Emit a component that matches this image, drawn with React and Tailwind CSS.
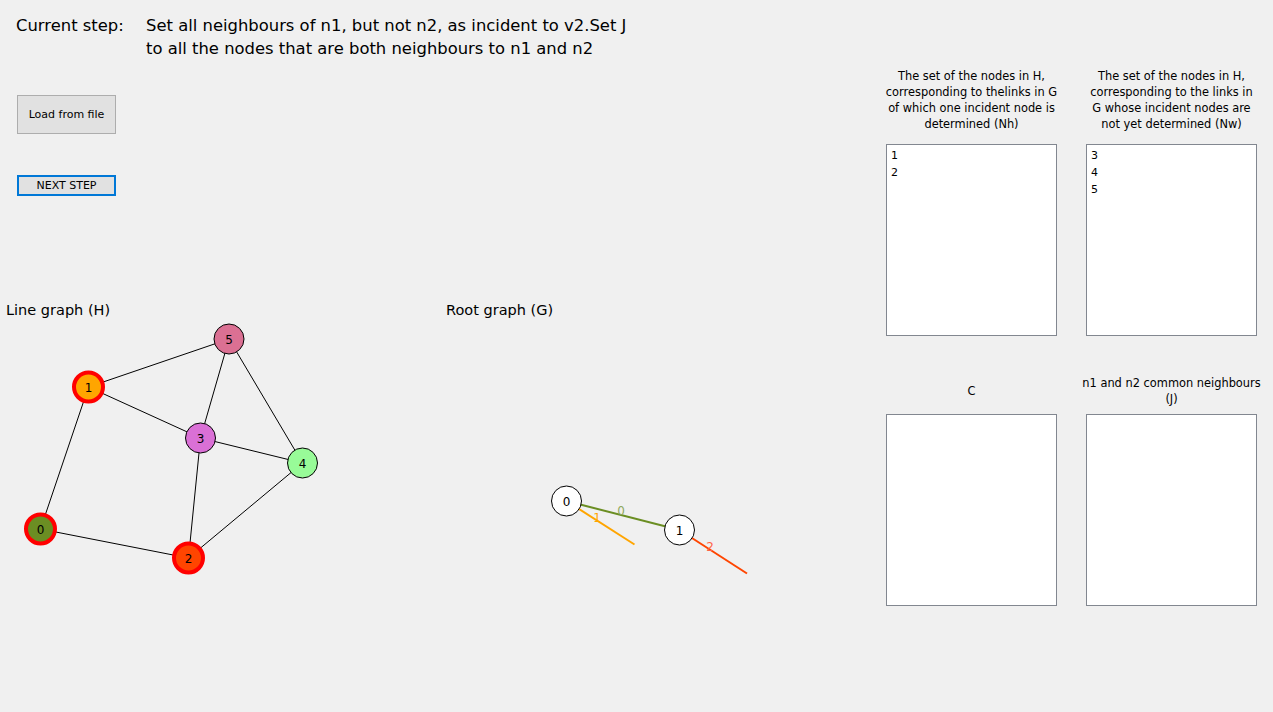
import React from "react";

const FONT = { fontFamily: '"DejaVu Sans", "Liberation Sans", sans-serif' };

const hNodes = [
  { id: 0, x: 40.5, y: 529, fill: "#6b8e23", ring: true },
  { id: 1, x: 88.5, y: 387, fill: "#ffa500", ring: true },
  { id: 2, x: 188.5, y: 558, fill: "#ff4500", ring: true },
  { id: 3, x: 200.5, y: 438, fill: "#da70d6" },
  { id: 4, x: 302.5, y: 463, fill: "#98fb98" },
  { id: 5, x: 229, y: 339, fill: "#db7093" },
];

const hEdges = [
  [5, 1], [5, 3], [5, 4], [1, 3], [1, 0], [3, 4], [3, 2], [4, 2], [0, 2],
];

function LineGraph() {
  const at = (id) => hNodes.find((n) => n.id === id);
  return (
    <svg width="440" height="290" viewBox="0 320 440 290">
      {hEdges.map(([a, b]) => (
        <line key={a + "-" + b} x1={at(a).x} y1={at(a).y} x2={at(b).x} y2={at(b).y} stroke="#000" strokeWidth="1" />
      ))}
      {hNodes.map((n) => (
        <g key={n.id}>
          <circle cx={n.x} cy={n.y} r={n.ring ? 14.5 : 15} fill={n.fill} stroke={n.ring ? "#ff0000" : "#000"} strokeWidth={n.ring ? 4 : 1} />
          <text x={n.x} y={n.y + 4.5} textAnchor="middle" fontSize="12" fill="#000" style={FONT}>{n.id}</text>
        </g>
      ))}
    </svg>
  );
}

function RootGraph() {
  return (
    <svg width="420" height="290" viewBox="440 320 420 290">
      <line x1="566.5" y1="501" x2="679.5" y2="530" stroke="#6b8e23" strokeWidth="2" />
      <line x1="566.5" y1="501" x2="634.5" y2="544.5" stroke="#ffa500" strokeWidth="2" />
      <line x1="679.5" y1="530" x2="747" y2="573.5" stroke="#ff4500" strokeWidth="2" />
      <text x="621" y="515" textAnchor="middle" fontSize="12" fill="#8fa860" style={FONT}>0</text>
      <text x="597" y="522" textAnchor="middle" fontSize="12" fill="#ffa500" style={FONT}>1</text>
      <text x="710" y="551" textAnchor="middle" fontSize="12" fill="#ff6347" style={FONT}>2</text>
      {[{ id: 0, x: 566.5, y: 501 }, { id: 1, x: 679.5, y: 530 }].map((n) => (
        <g key={n.id}>
          <circle cx={n.x} cy={n.y} r="15" fill="#fff" stroke="#000" strokeWidth="1" />
          <text x={n.x} y={n.y + 4.5} textAnchor="middle" fontSize="12" fill="#000" style={FONT}>{n.id}</text>
        </g>
      ))}
    </svg>
  );
}

function ListPanel({ lines, items = [], labelClass }) {
  return (
    <div className="flex flex-col">
      <div className={"-mx-[10px] flex flex-col text-center text-[11.4px] leading-[16px] whitespace-nowrap text-black " + labelClass}>
        {lines.map((l) => (
          <div key={l}>{l}</div>
        ))}
      </div>
      <div className="h-[192px] w-[171px] border border-[#828790] bg-white px-[4px] pt-[2px] text-[11px] leading-[17px] text-black">
        {items.map((it) => (
          <div key={it}>{it}</div>
        ))}
      </div>
    </div>
  );
}

export default function App() {
  return (
    <div className="flex h-[712px] w-[1273px] overflow-hidden bg-[#f0f0f0] text-black" style={FONT}>
      {/* left side: step text, buttons, drawings */}
      <div className="flex w-[860px] flex-col">
        <div className="flex pt-[14px] text-[16.4px] leading-[23px]">
          <div className="w-[146px] pl-[16px]">Current step:</div>
          <div>
            Set all neighbours of n1, but not n2, as incident to v2.Set J
            <br />
            to all the nodes that are both neighbours to n1 and n2
          </div>
        </div>

        <div className="mt-[35px] flex flex-col pl-[17px]">
          <button className="h-[39px] w-[99px] border border-[#adadad] bg-[#e1e1e1] pt-[2px] text-[11px] text-black">
            Load from file
          </button>
          <button className="mt-[41px] h-[21px] w-[99px] border-2 border-[#0078d7] bg-[#e1e1e1] text-[11px] leading-none text-black">
            NEXT STEP
          </button>
        </div>

        <div className="mt-[104px] flex">
          <div className="flex w-[440px] flex-col">
            <div className="h-[20px] pl-[6px] text-[14.5px] leading-[20px]">Line graph (H)</div>
            <LineGraph />
          </div>
          <div className="flex w-[420px] flex-col">
            <div className="h-[20px] pl-[6px] text-[14.5px] leading-[20px]">Root graph (G)</div>
            <RootGraph />
          </div>
        </div>
      </div>

      {/* right side: list boxes */}
      <div className="grid grid-cols-[171px_171px] content-start gap-x-[29px] gap-y-[39px] self-start pl-[26px] pt-[68px]">
        <ListPanel
          labelClass="h-[76px] justify-start"
          lines={["The set of the nodes in H,", "corresponding to thelinks in G", "of which one incident node is", "determined (Nh)"]}
          items={["1", "2"]}
        />
        <ListPanel
          labelClass="h-[76px] justify-start"
          lines={["The set of the nodes in H,", "corresponding to the links in", "G whose incident nodes are", "not yet determined (Nw)"]}
          items={["3", "4", "5"]}
        />
        <ListPanel labelClass="h-[39px] justify-center pb-[7px]" lines={["C"]} />
        <ListPanel labelClass="h-[39px] justify-center pb-[7px]" lines={["n1 and n2 common neighbours", "(J)"]} />
      </div>
    </div>
  );
}
